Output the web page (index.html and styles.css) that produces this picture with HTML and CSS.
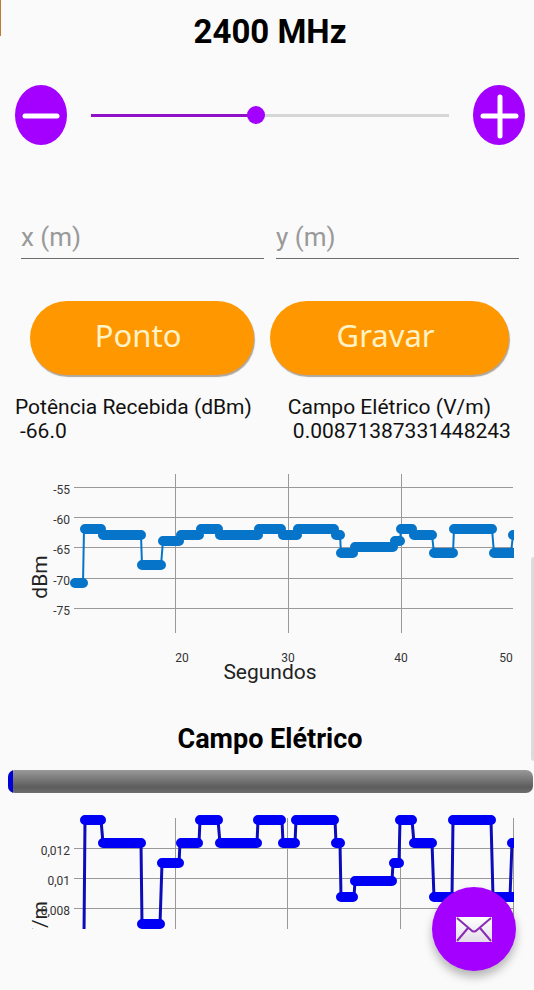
FILE: index.html
```html
<!DOCTYPE html>
<html lang="pt">
<head>
<meta charset="utf-8">
<meta name="viewport" content="width=device-width, initial-scale=1">
<title>2400 MHz</title>
<link rel="stylesheet" href="styles.css">
</head>
<body>
<span class="edge-mark"></span>
<span class="scroll-mark"></span>
<main class="screen">
  <h1 class="frequency"><label for="freq">2400 MHz</label></h1>

  <div class="tuner">
    <button class="step" type="button" aria-label="Diminuir">
      <svg viewBox="0 0 52 60"><path d="M10 31H42"/></svg>
    </button>
    <input class="slider" id="freq" type="range" min="0" max="100" value="46">
    <button class="step" type="button" aria-label="Aumentar">
      <svg viewBox="0 0 52 60"><path d="M10 31H43M27 12V51"/></svg>
    </button>
  </div>

  <div class="position">
    <input class="coord" type="text" placeholder="x (m)" aria-label="x (m)">
    <input class="coord" type="text" placeholder="y (m)" aria-label="y (m)">
  </div>

  <div class="actions">
    <button class="action" type="button">Ponto</button>
    <button class="action action-wide" type="button">Gravar</button>
  </div>

  <dl class="readings">
    <div class="reading"><dt>Potência Recebida (dBm)</dt><dd>-66.0</dd></div>
    <div class="reading"><dt>Campo Elétrico (V/m)</dt><dd>0.00871387331448243</dd></div>
  </dl>

  <svg class="chart" viewBox="0 465 534 225" role="img" aria-label="dBm / Segundos">
    <clipPath id="power-area"><rect x="60" y="470" width="454" height="165"/></clipPath>
    <path class="grid" d="M74 487.500H513M74 517.500H513M74 547.500H513M74 578.500H513M74 608.500H513M175.500 474V633M288.500 474V633M401.500 474V633"/>
    <g clip-path="url(#power-area)" class="power">
      <path class="link" d="M83 583L84 529M101 529L103 535M141 535L142 565M161 565L163 541M340 535L341 553M400 541L401 529M432 535L434 553M453 553L454 529M492 529L494 553M511 553L513 535"/>
      <path class="level" d="M75 583H83M85 529H101M103 535H141M142 565H161M163 541H179M181 535H199M201 529H218M220 535H258M259 529H281M283 535H297M298 529H334M336 535H340M341 553H353M355 547H393M395 541H400M401 529H412M414 535H432M434 553H453M454 529H492M494 553H518M513 535H518"/>
    </g>
    <g class="tick tick-y">
      <text x="70" y="494">-55</text><text x="70" y="524">-60</text><text x="70" y="554">-65</text><text x="70" y="585">-70</text><text x="70" y="615">-75</text>
    </g>
    <g class="tick tick-x">
      <text x="182" y="662">20</text><text x="288" y="662">30</text><text x="401" y="662">40</text><text x="506" y="662">50</text>
    </g>
    <text class="axis" x="270" y="679">Segundos</text>
    <text class="axis" transform="translate(47 577) rotate(-90)">dBm</text>
  </svg>

  <h2 class="section">Campo Elétrico</h2>
  <progress class="meter" value="1" max="100" aria-label="Campo Elétrico"></progress>

  <svg class="chart" viewBox="0 810 534 120" role="img" aria-label="V/m">
    <clipPath id="field-area"><rect x="20" y="810" width="494" height="119"/></clipPath>
    <path class="grid" d="M74 848.500H513M74 878.500H513M74 908.500H513M175.500 818V929M287.500 818V929M400.500 818V929M513.500 818V929"/>
    <g clip-path="url(#field-area)">
      <g class="field">
        <path class="link" d="M84 935L85 820M101 820L103 843M141 843L142 924M160 924L162 863M179 863L180 843M199 843L200 820M218 820L220 843M257 843L258 820M282 820L283 843M295 843L296 820M335 820L336 843M340 843L341 897M354 897L355 881M392 881L393 863M399 863L400 820M412 820L414 843M432 843L434 897M452 897L453 820M491 820L493 897M510 897L512 843"/>
        <path class="level" d="M85 820H101M103 843H141M142 924H160M162 863H179M181 843H198M200 820H218M220 843H257M258 820H281M283 843H295M296 820H334M336 843H340M341 897H353M355 881H392M394 863H399M400 820H412M414 843H432M434 897H453M453 820H491M493 897H518M512 843H518"/>
      </g>
      <text class="axis axis-end" transform="translate(47 901) rotate(-90)">V/m</text>
    </g>
    <g class="tick tick-y">
      <text x="70" y="855">0,012</text><text x="70" y="885">0,01</text><text x="70" y="915">0,008</text>
    </g>
  </svg>
</main>
<button class="fab" type="button" aria-label="Enviar">
  <svg viewBox="0 0 36 25">
    <defs><linearGradient id="paper" x1="0" y1="0" x2="0" y2="1"><stop offset="0" stop-color="#fff"/><stop offset="1" stop-color="#e4dcea"/></linearGradient></defs>
    <rect width="36" height="25" fill="url(#paper)"/>
    <path d="M1 1L15 13Q18 16 21 13L35 1M1 24L12 11M35 24L24 11"/>
  </svg>
</button>
</body>
</html>
```
FILE: styles.css
```css
* { box-sizing: border-box; }

body {
  margin: 0;
  min-height: 100vh;
  background: #fafafa;
  color: #111;
  font-family: Roboto, "Liberation Sans", sans-serif;
}

button { border: 0; padding: 0; cursor: pointer; }

.screen { padding-top: 8px; }

.frequency {
  margin: 0;
  padding-left: 6px;
  color: #000;
  font-size: 33px;
  line-height: 47px;
  text-align: center;
}

.tuner {
  display: flex;
  align-items: center;
  gap: 24px;
  margin-top: 30px;
  padding: 0 9px 0 15px;
}

.step {
  flex: none;
  width: 52px;
  height: 60px;
  border-radius: 50%;
  background: #a400ff;
}

.step svg { display: block; width: 100%; height: 100%; }
.step path { stroke: #fff; stroke-width: 5; stroke-linecap: round; fill: none; }

.slider {
  flex: 1;
  min-width: 0;
  height: 20px;
  margin: 0;
  appearance: none;
  background: linear-gradient(to right, #9010c8 46%, #d6d6d6 46%) center / 100% 3px no-repeat;
}

.slider::-webkit-slider-thumb {
  appearance: none;
  width: 18px;
  height: 18px;
  border-radius: 50%;
  background: #a400ff;
}

.position {
  display: flex;
  gap: 12px;
  margin-top: 68px;
  padding: 0 15px 0 21px;
}

.coord {
  flex: 1;
  min-width: 0;
  height: 46px;
  padding: 2px 0 0;
  border: 0;
  border-bottom: 1px solid #6c6c6c;
  background: none;
  color: #111;
  font: 26px Roboto, "Liberation Sans", sans-serif;
}

.coord::placeholder { color: #999; opacity: 1; }

.actions {
  display: flex;
  gap: 16px;
  margin-top: 42px;
  padding: 0 25px 0 30px;
}

.action {
  flex: 224;
  height: 74px;
  padding: 0 8px 6px 0;
  border-radius: 37px;
  background: #ff9800;
  box-shadow: 1px 2px 1px #b0a699;
  color: #fff2c6;
  font: 31px "Noto Sans", "Open Sans", sans-serif;
}

.action-wide { flex: 239; }

.readings {
  display: flex;
  gap: 36px;
  margin: 20px 0 0;
  padding: 0 15px;
  font-size: 21px;
  line-height: 24px;
  white-space: nowrap;
}

.reading dd { margin: 0; padding-left: 5px; }

.chart { display: block; width: 100%; margin-top: 22px; }

.grid { fill: none; stroke: #999; stroke-width: 1; }
.link { fill: none; stroke-width: 2; }
.level { fill: none; stroke-width: 10; stroke-linecap: round; }
.power .link, .power .level { stroke: #0674c8; }
.field .link { stroke: #0c0cb8; stroke-width: 3; }
.field .level { stroke: #0000f5; }

.tick { fill: #333; font-size: 12px; }
.tick-y { text-anchor: end; }
.tick-x { text-anchor: middle; }
.axis { fill: #222; font-size: 21px; text-anchor: middle; }
.axis-end { text-anchor: end; }

.section {
  margin: 34px 0 0;
  padding-left: 6px;
  color: #000;
  font-size: 27px;
  line-height: 30px;
  text-align: center;
}

.meter {
  display: block;
  width: calc(100% - 9px);
  height: 23px;
  margin: 16px 1px 0 8px;
  overflow: hidden;
  appearance: none;
  border: 0;
  border-radius: 7px;
}

.meter::-webkit-progress-bar { background: linear-gradient(#999, #5c5c5c 75%, #6e6e6e); }
.meter::-webkit-progress-value { background: #0000d8; }
.meter + .chart { margin-top: 17px; }

.fab {
  position: fixed;
  right: 18px;
  bottom: 19px;
  display: grid;
  place-items: center;
  width: 84px;
  height: 84px;
  border-radius: 50%;
  background: #a400ff;
  box-shadow: 0 6px 10px rgba(0, 0, 0, 0.28);
}

.fab svg { width: 36px; height: 25px; }
.fab path { fill: none; stroke: #8a2bb4; stroke-width: 2; }

.edge-mark {
  position: absolute;
  top: 0;
  left: 0;
  width: 1px;
  height: 36px;
  background: #c07a38;
}

.scroll-mark {
  position: absolute;
  top: 557px;
  right: 0;
  width: 3px;
  height: 204px;
  border-radius: 3px 0 0 3px;
  background: #dcdcdc;
}
```
